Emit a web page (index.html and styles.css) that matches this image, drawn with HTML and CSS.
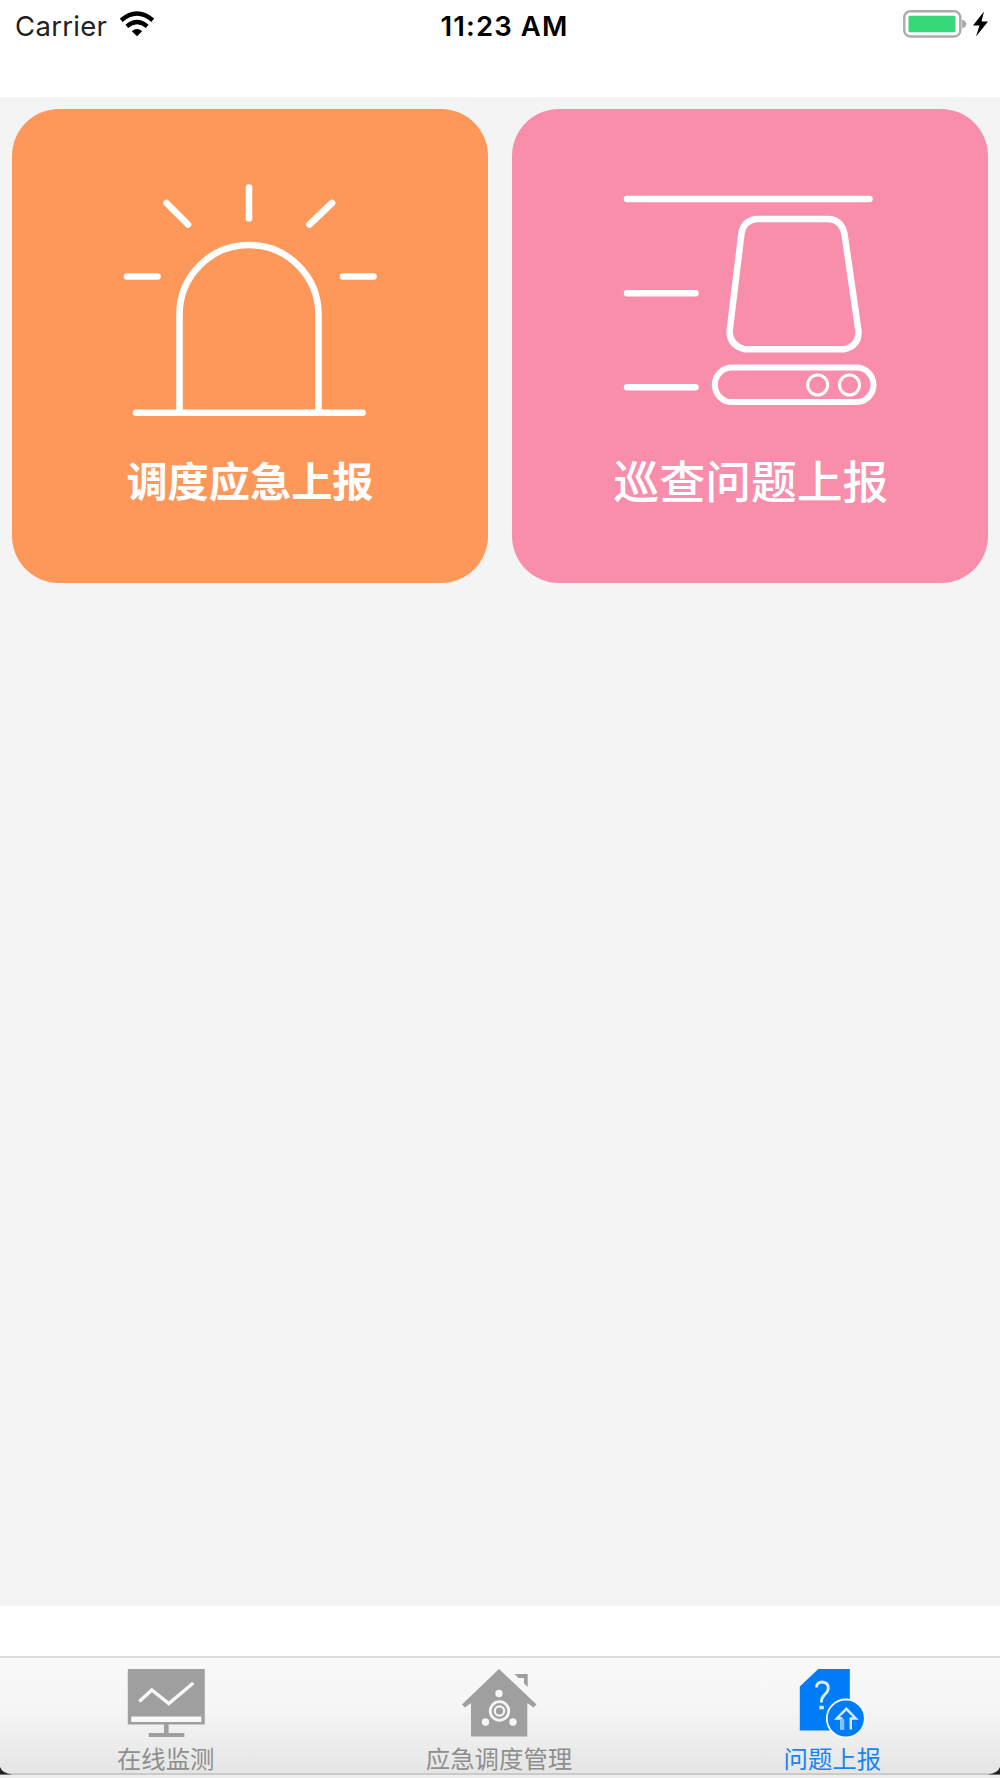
FILE: index.html
```html
<!DOCTYPE html>
<html lang="zh-CN">
<head>
<meta charset="utf-8">
<title>问题上报</title>
<link rel="stylesheet" href="styles.css">
</head>
<body>
<div class="screen">
  <header class="status">
    <div class="status-left">
      <span class="carrier">Carrier</span>
      <svg class="wifi" width="36" height="28" viewBox="120 9 36 28" fill="none" stroke="#000">
        <path d="M122.2 20.2Q138 6.800 153.800 20.200" stroke-width="4.400"/>
        <path d="M127.800 26.300Q138 17.700 148.200 26.300" stroke-width="4.200"/>
        <path d="M132.800 31.200Q138 26.700 143.200 31.200L138 36.300Z" fill="#000" stroke="none"/>
      </svg>
    </div>
    <span class="time">11:23 AM</span>
    <svg class="battery" width="88" height="30" viewBox="900 9 88 30">
      <rect x="904.300" y="11.300" width="56" height="25.200" rx="6" fill="#fff" stroke="#acacac" stroke-width="2.400"/>
      <rect x="908.500" y="15.800" width="47" height="16.500" rx="1.500" fill="#37d877"/>
      <path d="M962 19.500Q966.500 21.500 966.500 24Q966.500 26.500 962 28.500Z" fill="#acacac"/>
      <path d="M984 11.500L973 25.500H979.500L976 36.500L988 21.500H981.500Z" fill="#000"/>
    </svg>
  </header>

  <main class="content">
    <section class="card card-orange">
      <svg class="art" width="476" height="320" viewBox="12 109 476 320" fill="none" stroke="#fff" stroke-width="6.600" stroke-linecap="round">
        <path d="M249 187.500V218.500M166.500 203L188 224.500M332 203L309.500 224.500M127 276.500H157.500M343 276.500H373.500"/>
        <path d="M179.500 412V314.500A69.500 69.500 0 0 1 318.500 314.500V412M136 412.700H362.500"/>
      </svg>
      <span class="card-label label-dispatch">调度应急上报</span>
    </section>
    <section class="card card-pink">
      <svg class="art" width="476" height="320" viewBox="512 109 476 320" fill="none" stroke="#fff" stroke-width="6.500" stroke-linecap="round">
        <path d="M627 199H869.500M627 293.200H695.500M627 387.300H695.500"/>
        <path d="M756 219H829Q841.500 220 844.500 234L858.500 331Q859 346 844 349.300H745Q730.500 346 729.500 332L741.500 233Q743.500 221 756 219Z"/>
        <rect x="714.800" y="367.500" width="158.700" height="34.600" rx="17.300" stroke-width="6"/>
        <g stroke-width="3"><circle cx="817.700" cy="385" r="10"/><circle cx="849.500" cy="385" r="10"/></g>
      </svg>
      <span class="card-label label-patrol">巡查问题上报</span>
    </section>
  </main>

  <nav class="tabs">
    <a class="tab">
      <svg width="90" height="72" viewBox="121.700 1666 90 72">
        <path fill="#9f9f9f" d="M127.500 1669H204.500V1724.500H168.300V1733H184V1737H148.500V1733H163.700V1724.500H127.500Z"/>
        <path fill="#f8f8f8" d="M131 1716.500H201V1722H131Z"/>
        <path fill="none" stroke="#f8f8f8" stroke-width="3.500" d="M139 1701.500L151.500 1690L168.500 1703.500L193 1683"/>
      </svg>
      <span>在线监测</span>
    </a>
    <a class="tab">
      <svg width="90" height="72" viewBox="455 1666 90 72">
        <path fill="#9f9f9f" d="M499 1669L536.500 1704.500L533.500 1707.500L527.300 1703V1736.500H471V1703L465 1707.500L462 1704.500Z"/>
        <path fill="#9f9f9f" d="M514.500 1674H527.700V1687L524 1683.500V1678H518.500Z"/>
        <g fill="#f6f6f6"><circle cx="499" cy="1693.500" r="3.700"/><circle cx="485.500" cy="1722" r="3.700"/><circle cx="513" cy="1722" r="3.700"/></g>
        <circle cx="499.500" cy="1711" r="9.300" fill="none" stroke="#f6f6f6" stroke-width="2.800"/>
        <circle cx="499.500" cy="1711" r="4.700" fill="none" stroke="#f6f6f6" stroke-width="2.200"/>
      </svg>
      <span>应急调度管理</span>
    </a>
    <a class="tab active">
      <svg width="90" height="72" viewBox="788.700 1666 90 72">
        <path fill="#007cf7" d="M819 1669H850.500V1730.500H800.500V1686.500Z"/>
        <circle cx="846.500" cy="1718.500" r="19" fill="#007cf7" stroke="#f4f8fb" stroke-width="1.800"/>
        <path fill="none" stroke="#d7ecff" stroke-width="2.800" d="M817 1687.500Q817.500 1682 823 1682Q829 1682.500 829 1688Q829 1691.500 825 1695Q822 1698 822 1702.500"/>
        <path fill="#d7ecff" d="M820 1705.800H824.500V1709.300H820Z"/>
        <path fill="none" stroke="#d7ecff" stroke-width="2.400" d="M842 1729.500V1718.500H837.500L847 1708.800L856.500 1718.500H851.500V1729.500"/>
        <path fill="#80bfff" d="M841 1719H845V1730H841Z"/>
      </svg>
      <span>问题上报</span>
    </a>
  </nav>
  <svg class="corner corner-left" width="12" height="10" viewBox="0 0 12 10"><path d="M0 1Q2 7 12 8.500H0Z" fill="#222"/></svg>
  <svg class="corner corner-right" width="12" height="10" viewBox="0 0 12 10"><path d="M12 1Q10 7 0 8.500H12Z" fill="#222"/></svg>
</div>
</body>
</html>
```
FILE: styles.css
```css
* { box-sizing: border-box; }
body { margin: 0; background: #fff; }
.screen {
  position: relative;
  display: flex;
  flex-direction: column;
  width: 1000px;
  height: 1778px;
  overflow: hidden;
  font-family: Inter, "Noto Sans CJK SC", sans-serif;
}
.status {
  display: grid;
  grid-template-columns: 1fr auto 1fr;
  align-items: start;
  height: 97px;
  padding: 9px 12px 0 15px;
  color: #000;
}
.status-left { display: flex; gap: 12px; }
.carrier { font-size: 27.500px; line-height: 34px; letter-spacing: 0.3px; color: #222; }
.time { font-size: 27.500px; line-height: 34px; font-weight: 600; letter-spacing: 1.100px; padding-left: 6px; }
.battery { justify-self: end; }

.content {
  display: flex;
  flex: none;
  gap: 24px;
  align-items: flex-start;
  height: 1509px;
  padding: 12px;
  background: #f4f4f4;
}
.card {
  display: flex;
  flex-direction: column;
  align-items: center;
  width: 476px;
  height: 474px;
  border-radius: 47px;
  overflow: hidden;
}
.card-orange { background: #fe985a; }
.card-pink { background: #f98eac; }
.art { flex: none; }
.card-label {
  color: #fff;
  font-family: "Noto Sans CJK SC", sans-serif;
  line-height: 60px;
  white-space: nowrap;
  margin-top: 20px;
}
.label-dispatch { font-size: 41.200px; font-weight: 700; }
.label-patrol { font-size: 45.800px; font-weight: 500; padding-left: 2px; }

.tabs {
  display: flex;
  flex: none;
  height: 119px;
  margin-top: 50px;
  border-top: 2px solid #dedede;
  border-bottom: 2px solid #cacaca;
  background: linear-gradient(#f9f9f9, #f5f5f5 45%, #e5e5e5);
  box-shadow: 0 3px 0 #eee;
}
.tab {
  display: flex;
  flex: 1;
  flex-direction: column;
  align-items: center;
  padding-top: 8px;
  color: #8e8e8e;
  font-family: "Noto Sans CJK SC", sans-serif;
  font-size: 24.400px;
  line-height: 40px;
}
.tab svg { flex: none; }
.tab span { padding-right: 2px; }
.active { color: #1684f5; }
.corner { position: absolute; bottom: 2px; }
.corner-left { left: 0; }
.corner-right { right: 0; }
```
